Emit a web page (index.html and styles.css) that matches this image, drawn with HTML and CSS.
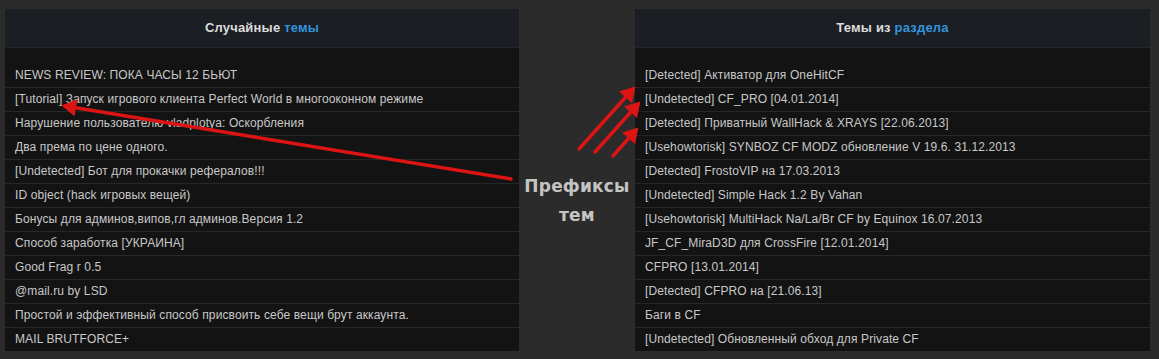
FILE: index.html
```html
<!DOCTYPE html>
<html lang="ru">
<head>
  <meta charset="UTF-8" />
  <title>Префиксы тем</title>
  <link rel="stylesheet" href="styles.css">
</head>
<body>

  <div class="page">
    <!-- Random topics -->
    <div class="panel panel-left">
      <div class="panel-head">Случайные <span>темы</span></div>
      <ul class="topics">
        <li>NEWS REVIEW: ПОКА ЧАСЫ 12 БЬЮТ</li>
        <li>[Tutorial] Запуск игрового клиента Perfect World в многооконном режиме</li>
        <li>Нарушение пользователю vladplotya: Оскорбления</li>
        <li>Два према по цене одного.</li>
        <li>[Undetected] Бот для прокачки рефералов!!!</li>
        <li>ID object (hack игровых вещей)</li>
        <li>Бонусы для админов,випов,гл админов.Версия 1.2</li>
        <li>Способ заработка [УКРАИНА]</li>
        <li>Good Frag r 0.5</li>
        <li>@mail.ru by LSD</li>
        <li>Простой и эффективный способ присвоить себе вещи брут аккаунта.</li>
        <li>MAIL BRUTFORCE+</li>
      </ul>
    </div>

    <div class="middle">
      <div class="label">Префиксы<br>тем</div>
    </div>

    <!-- Section topics -->
    <div class="panel panel-right">
      <div class="panel-head">Темы из <span>раздела</span></div>
      <ul class="topics">
        <li>[Detected] Активатор для OneHitCF</li>
        <li>[Undetected] CF_PRO [04.01.2014]</li>
        <li>[Detected] Приватный WallHack &amp; XRAYS [22.06.2013]</li>
        <li>[Usehowtorisk] SYNBOZ CF MODZ обновление V 19.6. 31.12.2013</li>
        <li>[Detected] FrostoVIP на 17.03.2013</li>
        <li>[Undetected] Simple Hack 1.2 By Vahan</li>
        <li>[Usehowtorisk] MultiHack Na/La/Br CF by Equinox 16.07.2013</li>
        <li>JF_CF_MiraD3D для CrossFire [12.01.2014]</li>
        <li>CFPRO [13.01.2014]</li>
        <li>[Detected] CFPRO на [21.06.13]</li>
        <li>Баги в CF</li>
        <li>[Undetected] Обновленный обход для Private CF</li>
      </ul>
    </div>
  </div>

  <!-- Red annotation arrows -->
  <svg class="arrows" width="1159" height="359" viewBox="0 0 1159 359">
    <defs>
      <marker id="head" markerWidth="5" markerHeight="5" refX="3.2" refY="2.5" orient="auto" markerUnits="strokeWidth">
        <path d="M0,0 L4.2,2.5 L0,5 Z" fill="#dc1414"/>
      </marker>
    </defs>
    <g stroke="#dc1414" stroke-width="3.5" stroke-linecap="round" marker-end="url(#head)">
      <line x1="511" y1="179" x2="65" y2="106"/>
      <line x1="579" y1="149" x2="633" y2="89"/>
      <line x1="595" y1="152" x2="638" y2="104"/>
      <line x1="613" y1="156" x2="636" y2="130"/>
    </g>
  </svg>

</body>
</html>
```

FILE: styles.css
```css
body {
  margin: 0;
  background: #2b2b2b;
  font-family: 'Liberation Sans', Arial, sans-serif;
  font-size: 12px;
  color: #c8c8c8;
  width: 1159px;
  height: 359px;
  overflow: hidden;
  position: relative;
}

.page {
  display: flex;
  padding: 9px 0 0 5px;
}

.panel {
  background: #131313;
  display: flex;
  flex-direction: column;
}

.panel-left {
  width: 514px;
}

.panel-right {
  width: 515px;
}

.panel-head {
  height: 38px;
  line-height: 38px;
  background: #1b1e23;
  border-bottom: 1px solid #23262b;
  text-align: center;
  font-weight: bold;
  font-size: 13px;
  letter-spacing: 0.2px;
  color: #dcdcdc;
}

.panel-head span {
  color: #3194dc;
}

.topics {
  list-style: none;
  margin: 0;
  padding: 16px 0 0 0;
}

.topics li {
  height: 23px;
  line-height: 23px;
  padding-left: 10px;
  border-bottom: 1px solid #272727;
  white-space: nowrap;
  letter-spacing: 0.11px;
}

.topics li:last-child {
  border-bottom: none;
}

.middle {
  width: 116px;
  padding-top: 163px;
}

.label {
  text-align: center;
  font-family: 'DejaVu Sans', sans-serif;
  font-weight: bold;
  font-size: 17px;
  line-height: 29px;
  color: #c4c4c4;
  letter-spacing: 0.2px;
}

/* annotation layer */
.arrows {
  position: absolute;
  top: 0;
  left: 0;
  pointer-events: none;
}
```
